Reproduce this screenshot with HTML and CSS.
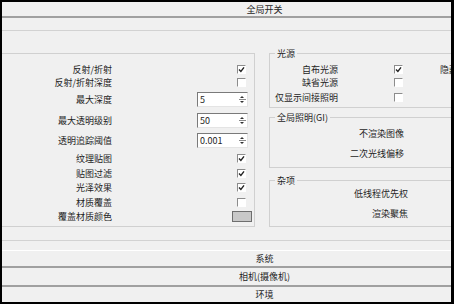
FILE: index.html
```html
<!DOCTYPE html>
<html lang="zh-CN">
<head>
  <meta charset="UTF-8">
  <title>全局开关</title>
  <link rel="stylesheet" href="styles.css">
</head>
<body>
  <div class="panel">
    <div class="inner">

      <!-- Global switches rollout -->
      <div class="roll-head first">全局开关</div>
      <div class="roll-body">
        <div class="frame">

          <!-- Left: geometry / materials -->
          <div class="group switches">
            <span class="lbl">反射/折射</span>
            <span class="chk"><svg viewBox="0 0 7 7"><path d="M1 3.4 L2.9 5.4 L6 1.4"/></svg></span>
            <span class="lbl">反射/折射深度</span>
            <span class="chk"></span>
            <span class="lbl">最大深度</span>
            <div class="spin"><span class="val">5</span><span class="arrows"><i class="up"></i><b></b><i class="down"></i></span></div>
            <span class="lbl">最大透明级别</span>
            <div class="spin"><span class="val">50</span><span class="arrows"><i class="up"></i><b></b><i class="down"></i></span></div>
            <span class="lbl">透明追踪阈值</span>
            <div class="spin"><span class="val">0.001</span><span class="arrows"><i class="up"></i><b></b><i class="down"></i></span></div>
            <span class="lbl">纹理贴图</span>
            <span class="chk"><svg viewBox="0 0 7 7"><path d="M1 3.4 L2.9 5.4 L6 1.4"/></svg></span>
            <span class="lbl">贴图过滤</span>
            <span class="chk"><svg viewBox="0 0 7 7"><path d="M1 3.4 L2.9 5.4 L6 1.4"/></svg></span>
            <span class="lbl">光泽效果</span>
            <span class="chk"><svg viewBox="0 0 7 7"><path d="M1 3.4 L2.9 5.4 L6 1.4"/></svg></span>
            <span class="lbl">材质覆盖</span>
            <span class="chk"></span>
            <span class="lbl">覆盖材质颜色</span>
            <span class="swatch"></span>
          </div>

          <!-- Right: lights / GI / misc -->
          <div class="side">
            <div class="group lights">
              <span class="legend">光源</span>
              <span class="lbl">自布光源</span>
              <span class="chk"><svg viewBox="0 0 7 7"><path d="M1 3.4 L2.9 5.4 L6 1.4"/></svg></span>
              <span class="lbl2">隐藏灯光</span>
              <span class="lbl">缺省光源</span>
              <span class="chk"></span>
              <span class="lbl">仅显示间接照明</span>
              <span class="chk"></span>
            </div>

            <div class="group gi">
              <span class="legend">全局照明(GI)</span>
              <span class="lbl">不渲染图像</span>
              <span class="lbl">二次光线偏移</span>
            </div>

            <div class="group misc">
              <span class="legend">杂项</span>
              <span class="lbl">低线程优先权</span>
              <span class="lbl">渲染聚焦</span>
            </div>
          </div>

        </div>
      </div>

      <!-- Collapsed rollouts -->
      <div class="roll-head sys">系统</div>
      <div class="roll-head cam">相机(摄像机)</div>
      <div class="roll-head env">环境</div>

    </div>
  </div>
</body>
</html>
```

FILE: styles.css
```css
/* Reset */
* {
  margin: 0;
  padding: 0;
  box-sizing: border-box;
}

body {
  background-color: #000;
  color: #1e1e1e;
  font: 9px/1 "Noto Sans CJK SC", "Liberation Sans", sans-serif;
}

/* Window frame */
.panel {
  margin: 2px 3px 2px 2px;
  width: 449px;
  height: 300px;
  overflow: hidden;
  background-color: #f0f0f0;
}
.inner {
  width: 525px; /* rollouts are wider than the visible area */
}

/* Rollout title bars */
.roll-head {
  display: flex;
  align-items: center;
  justify-content: center;
  border-bottom: 2px solid #a0a0a0;
}
.roll-head.first { height: 16px; }
.roll-head.sys { height: 17px; }
.roll-head.cam { height: 19px; }
.roll-head.env { height: 15px; border-bottom: none; }

.roll-body {
  padding: 12px 0 9px;
  border-bottom: 1px solid #fff;
}
.frame {
  display: flex;
  gap: 14px;
  height: 211px;
  padding-top: 22px;
  border-top: 1px solid #d2d2d2;
  border-bottom: 1px solid #d2d2d2;
}

/* Group boxes */
.group {
  position: relative;
  border: 1px solid #d0d0d0;
}
.legend {
  position: absolute;
  top: -6px;
  left: 5px;
  padding: 0 2px;
  line-height: 11px;
  background-color: #f0f0f0;
  white-space: nowrap;
}
.lbl {
  text-align: right;
  white-space: nowrap;
}
.lbl2 {
  white-space: nowrap;
}

.switches {
  display: grid;
  grid-template-columns: 110px 56px;
  grid-template-rows: 14px 13px 20px 22px 19px 17px 13px 15px 14px 15px;
  column-gap: 85px;
  align-items: center;
  width: 253px;
  height: 174px;
  padding-top: 8px;
  border-left: none;
}
.switches .chk {
  margin-left: 40px;
}

.side {
  width: 250px;
}
.lights {
  display: grid;
  grid-template-columns: 68px 56px 9px 37px auto;
  grid-template-rows: 14px 13px 16px;
  align-items: center;
  height: 55px;
  padding-top: 8px;
}
.lights .lbl { grid-column: 1; }
.lights .chk { grid-column: 3; }
.lights .lbl2 { grid-column: 5; }

.gi {
  display: grid;
  grid-template-columns: 134px;
  grid-template-rows: 14px 14px;
  row-gap: 6px;
  align-items: center;
  margin-top: 9px;
  height: 51px;
  padding-top: 8px;
}
.misc {
  display: grid;
  grid-template-columns: 138px;
  grid-template-rows: 14px 14px;
  row-gap: 6px;
  align-items: center;
  margin-top: 12px;
  height: 47px;
  padding-top: 5px;
}

/* Checkbox */
.chk {
  display: flex;
  align-items: center;
  justify-content: center;
  width: 9px;
  height: 9px;
  background-color: #fff;
  border: 1px solid;
  border-color: #8c8c8c #fff #fff #8c8c8c;
}
.chk svg {
  width: 7px;
  height: 7px;
  fill: none;
  stroke: #222;
  stroke-width: 1.4;
}

/* Spinner field */
.spin {
  display: flex;
  align-items: center;
  width: 51px;
  height: 15px;
  padding-left: 2px;
  background-color: #fff;
  border: 1px solid;
  border-color: #7a7a7a #e4e4e4 #e4e4e4 #7a7a7a;
}
.spin .val {
  flex: 1;
}
.arrows {
  display: flex;
  flex-direction: column;
  align-items: center;
  justify-content: center;
  gap: 1px;
  width: 8px;
  height: 100%;
  margin-right: 1px;
}
.arrows b {
  width: 7px;
  height: 1px;
  background-color: #8a8a8a;
}
.arrows .up {
  border-left: 2px solid transparent;
  border-right: 2px solid transparent;
  border-bottom: 2px solid #333;
}
.arrows .down {
  border-left: 2px solid transparent;
  border-right: 2px solid transparent;
  border-top: 2px solid #333;
}

/* Colour swatch */
.swatch {
  width: 20px;
  height: 11px;
  margin-left: 35px;
  background-color: #c8c8c8;
  border: 1px solid #6e6e6e;
}
```
